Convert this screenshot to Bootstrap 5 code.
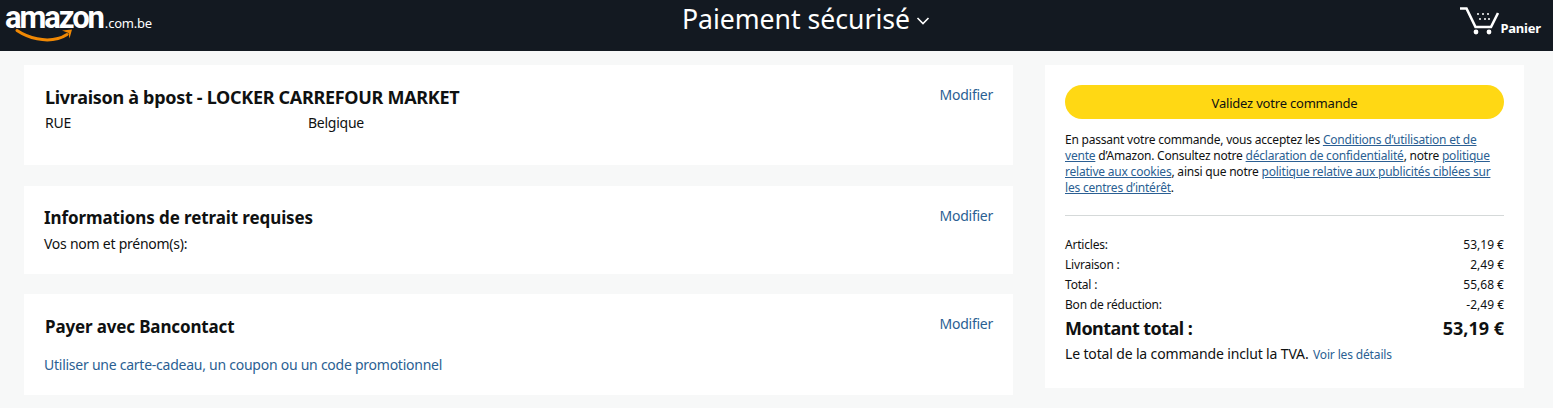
<!DOCTYPE html>
<html lang="fr">
<head>
    <meta charset="UTF-8">
    <meta name="viewport" content="width=device-width, initial-scale=1.0">
    <title>Paiement sécurisé</title>
    <link href="https://cdn.jsdelivr.net/npm/bootstrap@5.3.2/dist/css/bootstrap.min.css" rel="stylesheet">
    <style>
        body { background: #f7f8f8; color: #0f1111; font-family: "Noto Sans", "Liberation Sans", sans-serif; font-size: 14px; line-height: 20px; letter-spacing: -.25px; height: 408px; overflow: hidden; }
        a { color: #2b5f93; text-decoration: none; }
        .top-bar { height: 51px; background: #131921; color: #fff; letter-spacing: 0; }
        .brand-box { width: 259px; padding: 3px 0 0 5px; }
        .brand-word { font-family: Roboto, "Liberation Sans", sans-serif; font-weight: 700; font-size: 31px; letter-spacing: -2.1px; line-height: 30px; }
        .brand-tld { font-size: 13px; letter-spacing: -.2px; margin-left: 2px; }
        .brand-smile { display: block; margin: -4px 0 0 10px; }
        .page-title { font-size: 26.6px; line-height: 38px; }
        .chevron-icon { margin: 16px 0 0 6px; }
        .basket-box { width: 200px; padding: 6px 12px 0 0; }
        .basket-label { font-size: 13px; font-weight: 700; margin: 12px 0 0 0; line-height: 20px; letter-spacing: -.2px; }
        .main-area { padding: 14px 29px 0 24px; gap: 32px; }
        .left-col { width: 989px; gap: 20px; }
        .right-col { width: 479px; height: 323px; padding: 20px; background: #fff; }
        .step-box { background: #fff; padding: 20px 20px 0 21px; }
        .step-ship { height: 100px; margin-bottom: 1px; }
        .step-info { height: 88px; padding-left: 20px; }
        .step-pay { height: 101px; padding-top: 21px; }
        .step-pay > a { margin-top: -1px; }
        .step-title { font-size: 17px; font-weight: 700; line-height: 24px; margin: 0; letter-spacing: -.1px; }
        .step-ship .step-title { font-size: 18px; letter-spacing: -.3px; }
        .step-pay .step-title { letter-spacing: -.15px; }
        .addr-row { margin-top: 4px; }
        .addr-left { width: 263px; }
        .pay-btn { height: 34px; background: #ffd814; border: 0; border-radius: 17px; color: #0f1111; font-size: 13px; line-height: 36px; padding: 0; letter-spacing: -.2px; }
        .legal-text { font-size: 12px; line-height: 16px; margin: 13px 0 0; letter-spacing: -.21px; }
        .legal-text a { text-decoration: underline; }
        .rule-line { height: 1px; background: #d5d9d9; margin: 19px 0 19px; }
        .sum-row { font-size: 12px; line-height: 20px; letter-spacing: -.2px; }
        .sum-row > span:last-child, .sum-total > span:last-child { letter-spacing: 0; }
        .sum-total { font-size: 18px; font-weight: 700; line-height: 26px; letter-spacing: -.55px; }
        .tva-line { font-size: 14px; line-height: 20px; margin-top: 3px; letter-spacing: -.15px; }
        .tva-line a { font-size: 12px; margin-left: 1px; }
        .promo-link { margin-top: 16px; margin-left: -1px; }
    </style>
</head>
<body>
<header class="top-bar d-flex justify-content-between">
    <div class="brand-box">
        <div class="d-flex align-items-baseline"><span class="brand-word">amazon</span><span class="brand-tld">.com.be</span></div>
        <svg class="brand-smile" width="62" height="14" viewBox="0 0 62 14">
            <path d="M2 1.500C14 9.500 30 13 43 9.500C47 8.500 49 7.500 52 5.500" fill="none" stroke="#f08804" stroke-width="3" stroke-linecap="round"/>
            <path d="M47 1.500L57 .5L54.500 9.500L53.500 4Z" fill="#f08804"/>
        </svg>
    </div>
    <div class="page-title d-flex align-items-start">
        <span>Paiement sécurisé</span>
        <svg class="chevron-icon" width="14" height="10" viewBox="0 0 14 10"><path d="M1.500 2L7 7.500L12.500 2" fill="none" stroke="#fff" stroke-width="1.6"/></svg>
    </div>
    <div class="basket-box d-flex justify-content-end">
        <svg width="40" height="30" viewBox="0 0 40 30">
            <path d="M0 2.500H6.500L15.500 21H31L38 7" fill="none" stroke="#fff" stroke-width="2.6"/>
            <circle cx="16" cy="26" r="2.4" fill="#fff"/><circle cx="29" cy="26" r="2.4" fill="#fff"/>
            <g fill="#fff"><circle cx="18" cy="8" r="1"/><circle cx="23" cy="8" r="1"/><circle cx="28" cy="8" r="1"/><circle cx="20" cy="13" r="1"/><circle cx="25" cy="13" r="1"/><circle cx="29" cy="13" r="1"/></g>
        </svg>
        <span class="basket-label">Panier</span>
    </div>
</header>

<main class="main-area d-flex align-items-start">
    <div class="left-col d-flex flex-column">
        <section class="step-box step-ship d-flex justify-content-between">
            <div>
                <h2 class="step-title">Livraison à bpost - LOCKER CARREFOUR MARKET</h2>
                <div class="addr-row d-flex"><div class="addr-left">RUE</div><div>Belgique</div></div>
            </div>
            <a href="#">Modifier</a>
        </section>
        <section class="step-box step-info d-flex justify-content-between">
            <div>
                <h2 class="step-title">Informations de retrait requises</h2>
                <div class="mt-1">Vos nom et prénom(s):</div>
            </div>
            <a href="#">Modifier</a>
        </section>
        <section class="step-box step-pay d-flex justify-content-between">
            <div>
                <h2 class="step-title">Payer avec Bancontact</h2>
                <a class="promo-link d-block" href="#">Utiliser une carte-cadeau, un coupon ou un code promotionnel</a>
            </div>
            <a href="#">Modifier</a>
        </section>
    </div>

    <aside class="right-col">
        <button type="button" class="btn pay-btn w-100">Validez votre commande</button>
        <p class="legal-text">En passant votre commande, vous acceptez les <a href="#">Conditions d’utilisation et de vente</a> d’Amazon. Consultez notre <a href="#">déclaration de confidentialité</a>, notre <a href="#">politique relative aux cookies</a>, ainsi que notre <a href="#">politique relative aux publicités ciblées sur les centres d’intérêt</a>.</p>
        <div class="rule-line"></div>
        <div class="sum-row d-flex justify-content-between"><span>Articles:</span><span>53,19 €</span></div>
        <div class="sum-row d-flex justify-content-between"><span>Livraison :</span><span>2,49 €</span></div>
        <div class="sum-row d-flex justify-content-between"><span>Total :</span><span>55,68 €</span></div>
        <div class="sum-row d-flex justify-content-between"><span>Bon de réduction:</span><span>-2,49 €</span></div>
        <div class="sum-total d-flex justify-content-between"><span>Montant total :</span><span>53,19 €</span></div>
        <div class="tva-line">Le total de la commande inclut la TVA. <a href="#">Voir les détails</a></div>
    </aside>
</main>
<script src="https://cdn.jsdelivr.net/npm/bootstrap@5.3.2/dist/js/bootstrap.bundle.min.js"></script>
</body>
</html>
